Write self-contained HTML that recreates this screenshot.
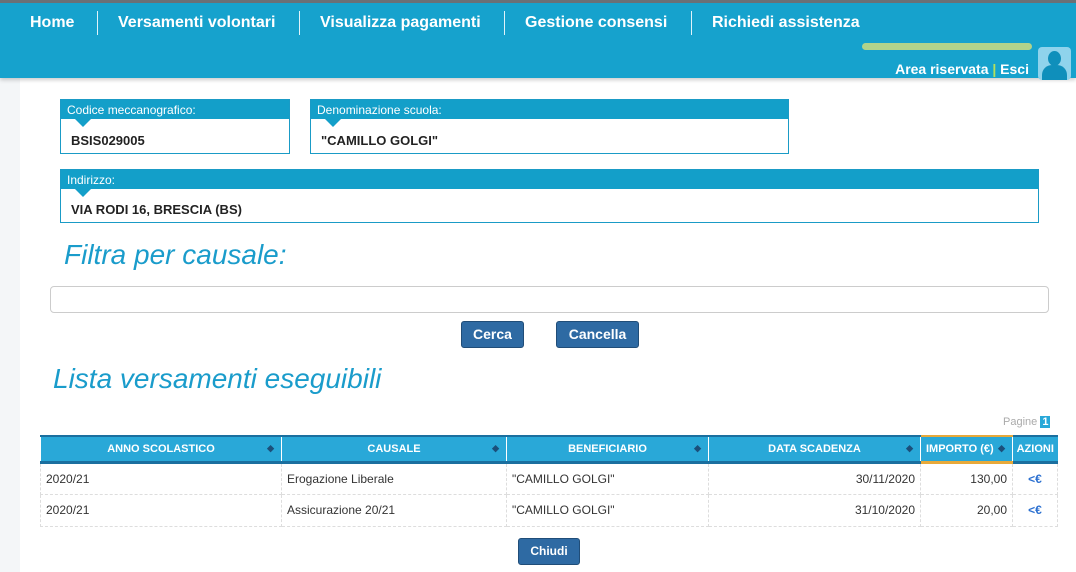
<!DOCTYPE html>
<html><head><meta charset="utf-8"><style>
*{box-sizing:border-box;margin:0;padding:0}
body{width:1076px;height:572px;overflow:hidden;background:#f4f6f8;font-family:"Liberation Sans",Arial,sans-serif;position:relative}
.main{position:absolute;left:20px;top:0;width:1056px;height:572px;background:#fff}
.hdr{position:absolute;left:0;top:0;width:1076px;height:78px;background:#16a2cd;border-top:3px solid #6a7076;box-shadow:0 2px 4px rgba(0,0,0,.2)}
.nav{position:absolute;top:11px;color:#fff;font-weight:bold;font-size:16px}
.sep{position:absolute;top:8px;width:1px;height:24px;background:#e0f3fa}
.ar{position:absolute;right:47px;top:58px;color:#fff;font-weight:bold;font-size:14px}
.av{position:absolute;left:1038px;top:44px;width:33px;height:33px;background:#8fd3ec;border-radius:4px;overflow:hidden}
.box{position:absolute;border:1px solid #1a9bc6;background:#fff}
.box .l{background:#139fc9;color:#fff;font-size:12px;height:19px;padding:3px 0 0 6px;position:relative}
.box .l:after{content:"";position:absolute;left:14px;bottom:-8px;border:8px solid transparent;border-top-color:#139fc9;border-bottom:0}
.box .v{font-size:13px;font-weight:bold;color:#222;padding:14px 0 0 10px}
h2{position:absolute;font-weight:normal;font-style:italic;color:#1a9ccb;font-size:28px}
.btn{position:absolute;background:#2e6aa3;border:1px solid #204d78;border-radius:3px;color:#fff;font-weight:bold;font-size:14px;text-align:center;line-height:24px}
table{position:absolute;left:40px;top:435px;width:1018px;border-collapse:collapse;font-size:12px;color:#333}
th{background:#29a8d8;color:#fff;font-size:11px;height:26px;border-top:2px solid #1b6f9f;border-bottom:3px solid #1b6f9f;border-left:1px solid #fff;position:relative;font-weight:bold}
th .s{position:absolute;right:7px;top:6px;font-size:9px;color:#1b4f7a}
td{height:32px;border:1px dashed #ddd;padding:0 5px}
</style></head><body>
<div class="main"></div>
<div class="hdr">
<span class="nav" style="left:30px">Home</span><span class="sep" style="left:97px"></span>
<span class="nav" style="left:118px">Versamenti volontari</span><span class="sep" style="left:299px"></span>
<span class="nav" style="left:320px">Visualizza pagamenti</span><span class="sep" style="left:504px"></span>
<span class="nav" style="left:525px">Gestione consensi</span><span class="sep" style="left:691px"></span>
<span class="nav" style="left:712px">Richiedi assistenza</span>
<div style="position:absolute;left:862px;top:40px;width:170px;height:7px;background:#d8e07a;border-radius:4px;opacity:.8"></div>
<span class="ar">Area riservata <span style="color:#b5e05a">|</span> Esci</span>
<div class="av"><div style="position:absolute;left:10px;top:4px;width:13px;height:15px;border-radius:50%;background:#0f8fbb"></div><div style="position:absolute;left:4px;top:18px;width:25px;height:18px;border-radius:10px 10px 0 0;background:#0f8fbb"></div></div>
</div>
<div class="box" style="left:60px;top:99px;width:230px;height:55px"><div class="l">Codice meccanografico:</div><div class="v">BSIS029005</div></div>
<div class="box" style="left:310px;top:99px;width:479px;height:55px"><div class="l">Denominazione scuola:</div><div class="v">"CAMILLO GOLGI"</div></div>
<div class="box" style="left:60px;top:169px;width:979px;height:54px"><div class="l">Indirizzo:</div><div class="v" style="padding-top:13px">VIA RODI 16, BRESCIA (BS)</div></div>
<h2 style="left:64px;top:239px">Filtra per causale:</h2>
<div style="position:absolute;left:50px;top:286px;width:999px;height:27px;border:1px solid #ccc;border-radius:4px;background:#fff"></div>
<div class="btn" style="left:461px;top:321px;width:63px;height:27px">Cerca</div>
<div class="btn" style="left:556px;top:321px;width:83px;height:27px">Cancella</div>
<h2 style="left:53px;top:363px">Lista versamenti eseguibili</h2>
<div style="position:absolute;left:1003px;top:416px;font-size:11px;color:#aaa">Pagine <span style="background:#29a8d8;color:#fff;padding:0 2px;font-weight:bold">1</span></div>
<table>
<tr><th style="width:241px">ANNO SCOLASTICO<span class="s">◆</span></th><th style="width:225px">CAUSALE<span class="s">◆</span></th><th style="width:202px">BENEFICIARIO<span class="s">◆</span></th><th style="width:212px">DATA SCADENZA<span class="s">◆</span></th><th style="width:92px;border-top-color:#e8a93a;border-bottom-color:#e8a93a;text-align:left;padding-left:5px">IMPORTO (€)<span class="s">◆</span></th><th>AZIONI</th></tr>
<tr><td>2020/21</td><td>Erogazione Liberale</td><td>"CAMILLO GOLGI"</td><td style="text-align:right">30/11/2020</td><td style="text-align:right">130,00</td><td style="text-align:center;color:#2a6fd0;font-weight:bold">&lt;€</td></tr>
<tr><td>2020/21</td><td>Assicurazione 20/21</td><td>"CAMILLO GOLGI"</td><td style="text-align:right">31/10/2020</td><td style="text-align:right">20,00</td><td style="text-align:center;color:#2a6fd0;font-weight:bold">&lt;€</td></tr>
</table>
<div class="btn" style="left:518px;top:538px;width:62px;height:27px;font-size:12px">Chiudi</div>
</body></html>
